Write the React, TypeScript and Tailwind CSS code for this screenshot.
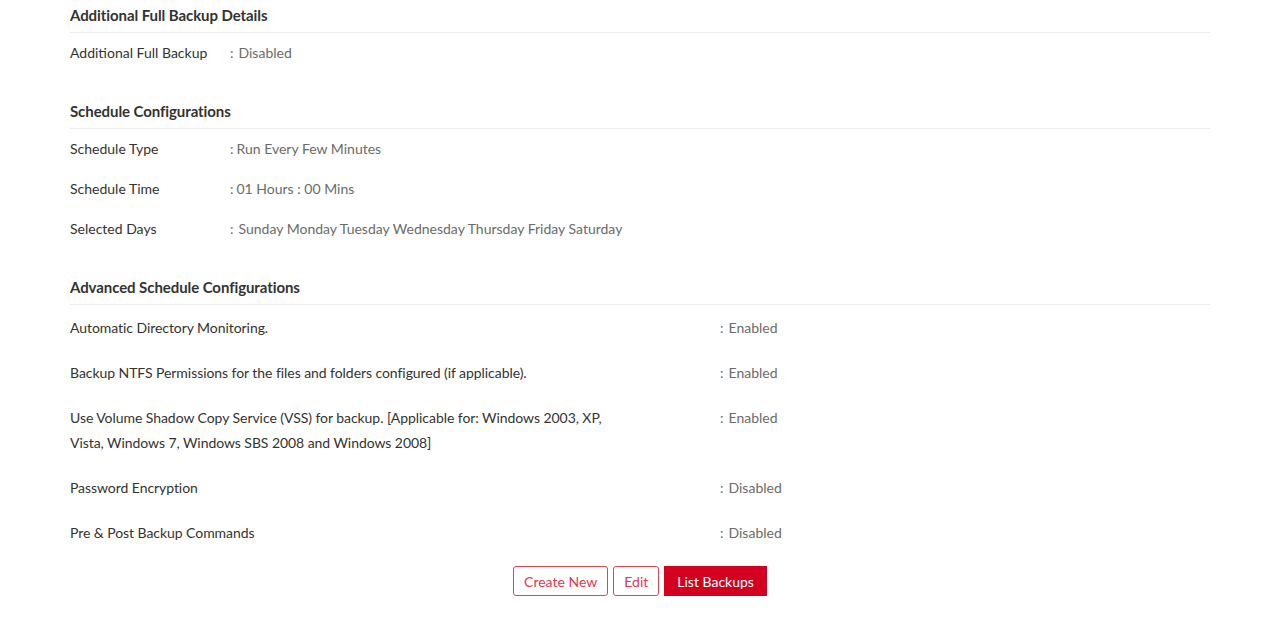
import React from 'react';

type Row = { label: string; value: string; gap?: string };

const Heading: React.FC<{ title: string }> = ({ title }) => (
  <div className="pt-[5px] pb-[7px] border-b border-[#ececec]">
    <h3 className="text-[15px] leading-5 font-bold text-[#333] tracking-[-0.08px]">{title}</h3>
  </div>
);

const SimpleRow: React.FC<Row> = ({ label, value, gap = 'pl-[5px]' }) => (
  <div className="flex py-[10px] leading-5 text-[14px]">
    <div className="w-[160px] shrink-0 text-[#333]">{label}</div>
    <div className="flex text-[#6b6b6b]">
      <span>:</span>
      <span className={gap}>{value}</span>
    </div>
  </div>
);

const WideRow: React.FC<Row> = ({ label, value }) => (
  <div className="flex py-[10px] leading-[25px] text-[14px]">
    <div className="w-[650px] shrink-0 pr-[90px] text-[#333] tracking-[-0.06px]">{label}</div>
    <div className="flex text-[#6b6b6b]">
      <span>:</span>
      <span className="pl-[5px]">{value}</span>
    </div>
  </div>
);

export default function App() {
  return (
    <div className="bg-white min-h-screen px-[70px] pr-[71px] font-['Lato','Open_Sans',sans-serif]">
      <section>
        <Heading title="Additional Full Backup Details" />
        <SimpleRow label="Additional Full Backup" value="Disabled" />
      </section>

      <section className="mt-[23px]">
        <Heading title="Schedule Configurations" />
        <SimpleRow label="Schedule Type" value="Run Every Few Minutes" gap="pl-[3px]" />
        <SimpleRow label="Schedule Time" value="01 Hours : 00 Mins" gap="pl-[3px]" />
        <SimpleRow
          label="Selected Days"
          value="Sunday Monday Tuesday Wednesday Thursday Friday Saturday"
        />
      </section>

      <section className="mt-[23px]">
        <Heading title="Advanced Schedule Configurations" />
        <WideRow label="Automatic Directory Monitoring." value="Enabled" />
        <WideRow
          label="Backup NTFS Permissions for the files and folders configured (if applicable)."
          value="Enabled"
        />
        <WideRow
          label="Use Volume Shadow Copy Service (VSS) for backup. [Applicable for: Windows 2003, XP, Vista, Windows 7, Windows SBS 2008 and Windows 2008]"
          value="Enabled"
        />
        <WideRow label="Password Encryption" value="Disabled" />
        <WideRow label="Pre & Post Backup Commands" value="Disabled" />
      </section>

      <div className="mt-[11px] flex justify-center gap-[5px]">
        <button className="h-[30px] px-[10px] text-[14px] text-[#e8334f] border border-[#e8404f] rounded-[3px] bg-white">
          Create New
        </button>
        <button className="h-[30px] px-[10px] text-[14px] text-[#e8334f] border border-[#e8404f] rounded-[3px] bg-white">
          Edit
        </button>
        <button className="h-[30px] px-[12px] text-[14px] text-white bg-[#d3001f] border border-[#d3001f]">
          List Backups
        </button>
      </div>
    </div>
  );
}
